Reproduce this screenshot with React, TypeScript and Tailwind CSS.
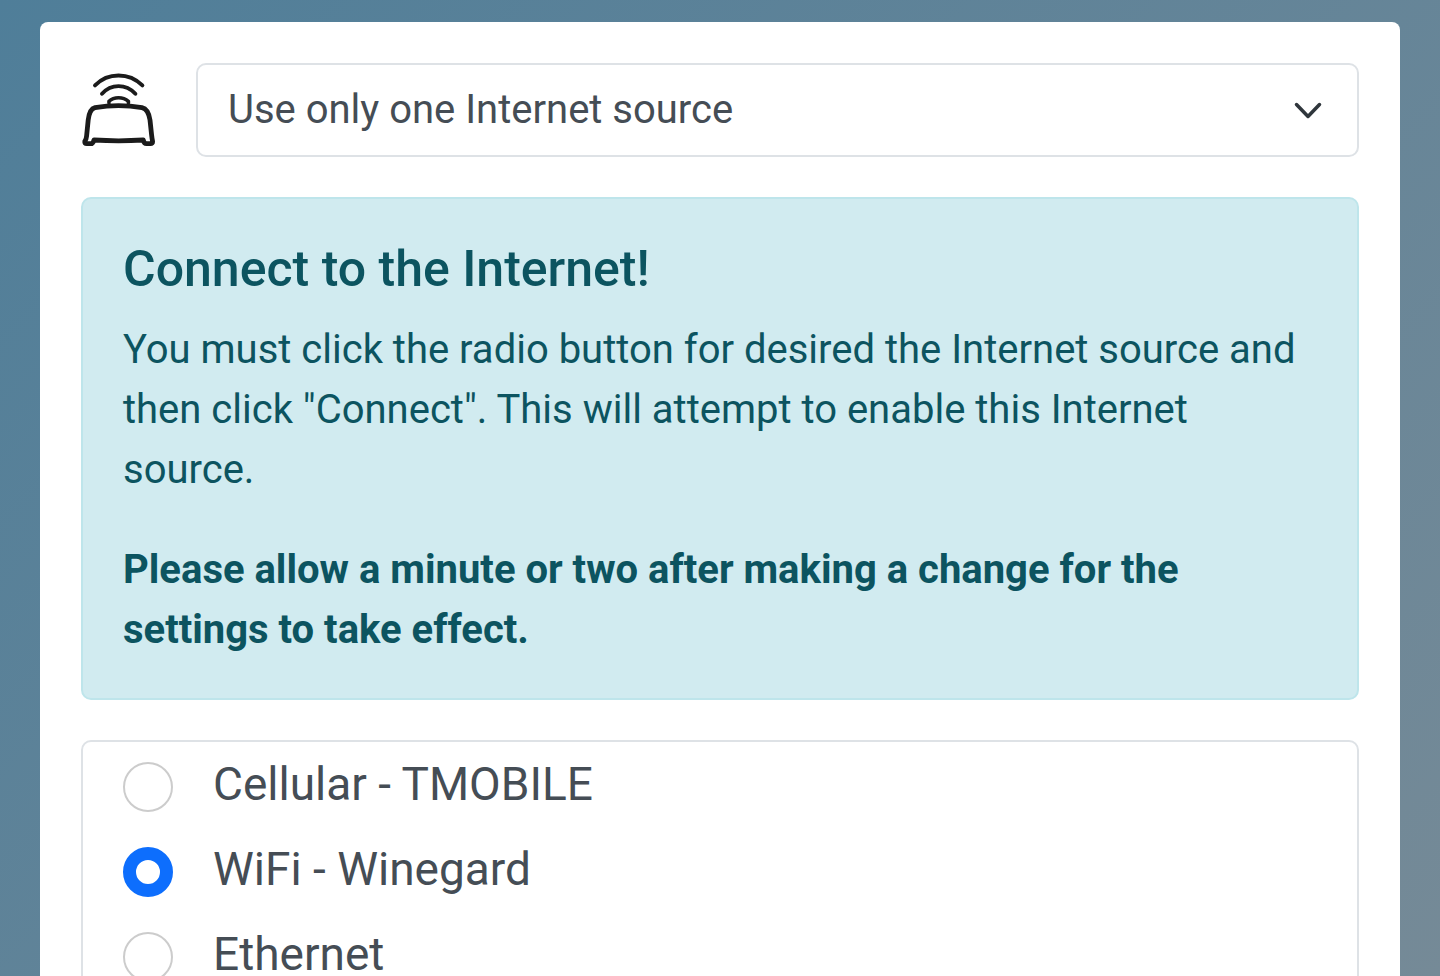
import { useState } from "react";

interface Source {
  id: string;
  label: string;
}

const SOURCES: Source[] = [
  { id: "cellular", label: "Cellular - TMOBILE" },
  { id: "wifi", label: "WiFi - Winegard" },
  { id: "ethernet", label: "Ethernet" },
];

function RouterIcon() {
  return (
    <svg
      viewBox="11 12 75 76"
      className="h-[76px] w-[75px] shrink-0"
      fill="none"
      stroke="#1b1b1b"
      strokeLinecap="round"
      strokeLinejoin="round"
      aria-hidden="true"
    >
      {/* Signal */}
      <path strokeWidth="3.9" d="M25 25.4C38 12.2 59 12.2 72.400 25.4" />
      <path strokeWidth="3.9" d="M32 33.8C41 23.6 56 23.6 65.400 33.8" />
      <path strokeWidth="3.6" d="M39 43V41.3C44 36.600 53 36.600 58.400 41.3V43" />
      {/* Body */}
      <path
        strokeWidth="4.8"
        d="M25 47.600Q48.500 43.600 72 47.600C76.500 48.600 79 53.500 80 60L81.600 75Q82 78.500 82.600 81.500Q82.700 83.700 80.500 83.700H76.500Q74 83.700 73.300 80Q48.500 81.600 24 80Q23 83.700 20.800 83.700H16.800Q14.400 83.700 14.800 81.300Q16.300 79.500 16.600 76L18.200 60C19 53 21 48.600 25 47.600Z"
      />
    </svg>
  );
}

export default function App() {
  const [source, setSource] = useState("wifi");

  return (
    <main className="flex h-screen flex-col overflow-hidden bg-linear-135 from-[#4f7e99] to-[#758a97] px-10 pt-[22px] font-[Roboto,sans-serif] text-[#454d55]">
      <div className="flex-1 rounded-t-lg bg-white px-[41px] pt-[41px]">
        {/* Mode */}
        <div className="flex items-center gap-10">
          <RouterIcon />
          <div className="relative flex-1">
            <select
              aria-label="Internet source mode"
              className="block h-[94px] w-full appearance-none rounded-[10px] border-2 border-[#dee2e6] bg-white px-[30px] text-[40px] leading-[60px]"
            >
              <option>Use only one Internet source</option>
            </select>
            <svg
              viewBox="0 0 28 18"
              className="pointer-events-none absolute top-[39px] right-[37px] h-[18px] w-7"
              fill="none"
              stroke="#2f363c"
              strokeWidth="3.5"
              strokeLinecap="round"
              strokeLinejoin="round"
              aria-hidden="true"
            >
              <path d="M2.5 2.5L14 14.5L25.5 2.5" />
            </svg>
          </div>
        </div>

        {/* Notice */}
        <section className="mt-10 rounded-[10px] border-2 border-[#bee5eb] bg-[#d1ebf0] px-10 pt-10 pb-[38px] text-[40px] leading-[60px] text-[#0c5460]">
          <h1 className="mb-[21px] text-[50px] leading-[60px] font-medium">
            Connect to the Internet!
          </h1>
          <p className="mb-10">
            You must click the radio button for desired the Internet source and
            then click "Connect". This will attempt to enable this Internet
            source.
          </p>
          <p className="font-bold">
            Please allow a minute or two after making a change for the settings
            to take effect.
          </p>
        </section>

        {/* Sources */}
        <fieldset className="mt-10 rounded-[10px] border-2 border-[#dee2e6] px-10 pt-2 pb-5">
          {SOURCES.map((item) => (
            <label
              key={item.id}
              htmlFor={item.id}
              className="flex h-[85px] items-start gap-10 text-[46px] leading-[68px]"
            >
              <input
                type="radio"
                id={item.id}
                name="source"
                checked={source === item.id}
                onChange={() => setSource(item.id)}
                className="mt-3 size-[50px] shrink-0 appearance-none rounded-full border-2 border-[#cccccc] bg-white checked:border-[13px] checked:border-[#0d6efd]"
              />
              {item.label}
            </label>
          ))}
        </fieldset>
      </div>
    </main>
  );
}
